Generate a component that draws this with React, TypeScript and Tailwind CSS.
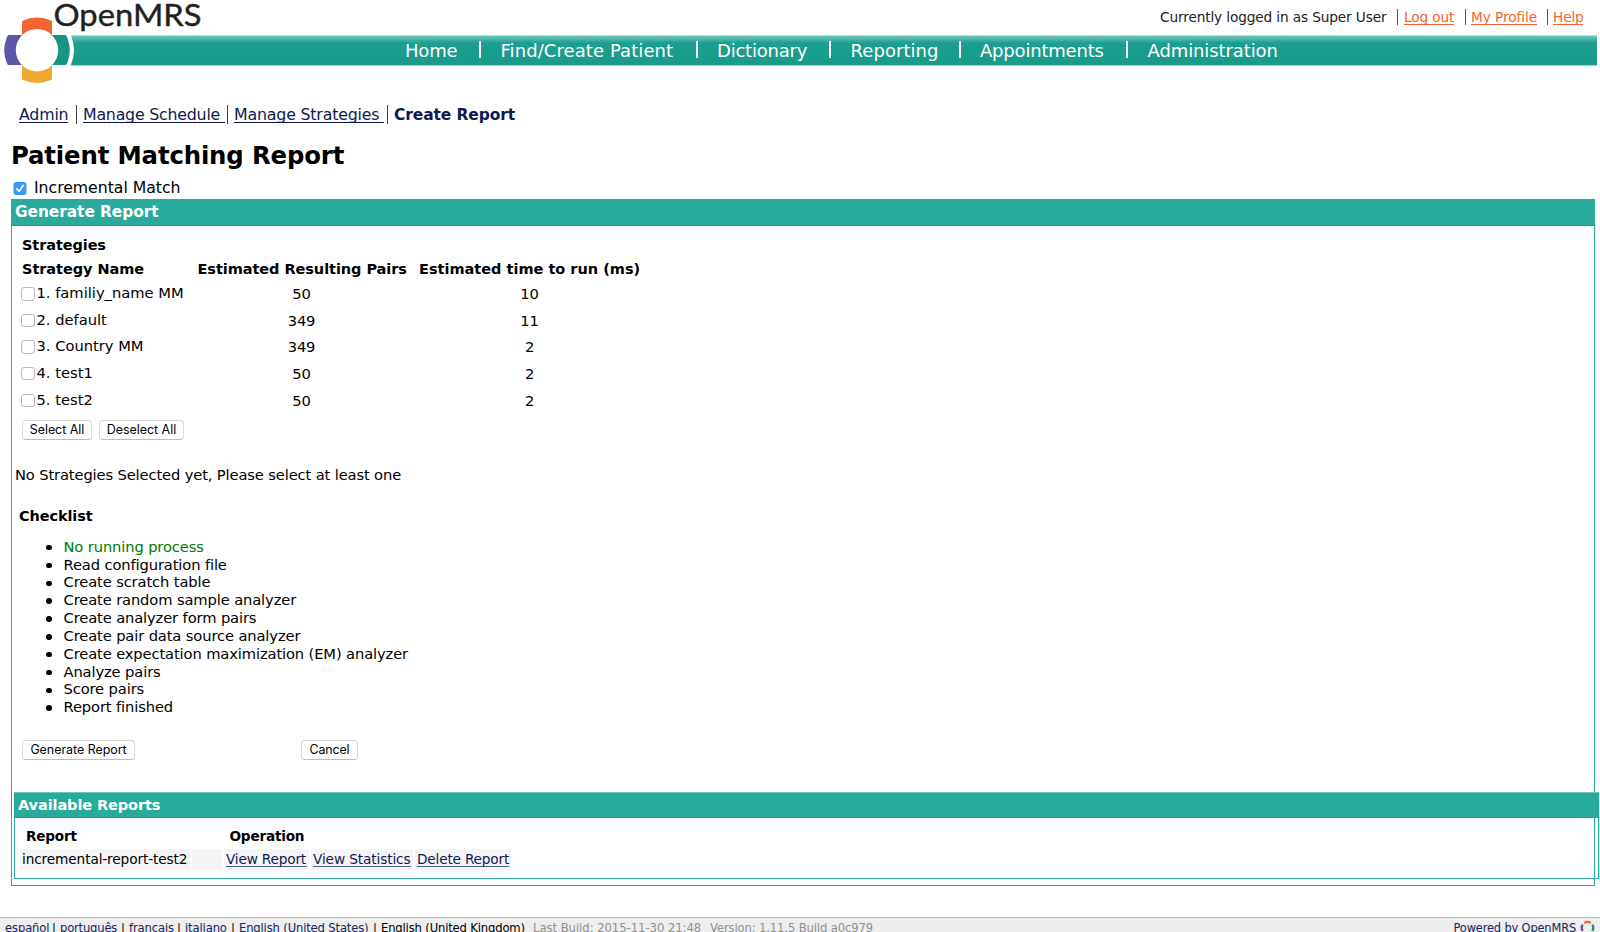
import type { ReactNode } from "react";

const nav = [
  { label: "Home", cls: "w-[74px] tracking-[-0.2px]" },
  { label: "Find/Create Patient", cls: "w-[195px] tracking-[0.08px]" },
  { label: "Dictionary", cls: "w-[112px] tracking-[-0.22px]" },
  { label: "Reporting", cls: "w-[108px] tracking-[0.06px]" },
  { label: "Appointments", cls: "w-[146px] tracking-[-0.2px]" },
  { label: "Administration", cls: "w-[140px] tracking-[-0.1px]" },
];

const strategies = [
  { name: "1. familiy_name MM", pairs: "50", time: "10" },
  { name: "2. default", pairs: "349", time: "11" },
  { name: "3. Country MM", pairs: "349", time: "2" },
  { name: "4. test1", pairs: "50", time: "2" },
  { name: "5. test2", pairs: "50", time: "2" },
];

const steps = [
  "Read configuration file",
  "Create scratch table",
  "Create random sample analyzer",
  "Create analyzer form pairs",
  "Create pair data source analyzer",
  "Create expectation maximization (EM) analyzer",
  "Analyze pairs",
  "Score pairs",
  "Report finished",
];

function Button({ className, children }: { className: string; children: ReactNode }) {
  return (
    <button
      type="button"
      className={`flex h-[20px] items-center justify-center rounded-[4px] border border-[#d8d8d8] border-b-[#bdbdbd] bg-white font-['Inter',sans-serif] text-[12.4px] leading-none whitespace-nowrap text-black ${className}`}
    >
      {children}
    </button>
  );
}

function Step({ children, className = "" }: { children: ReactNode; className?: string }) {
  return (
    <li className="flex h-[17.83px] items-center">
      <span className="mt-[2px] mr-[12px] h-[5.5px] w-[5.5px] rounded-full bg-black" />
      <span className={className}>{children}</span>
    </li>
  );
}

function Logo() {
  return (
    <svg className="absolute top-0 left-0" width="210" height="90" viewBox="0 0 210 90">
      <defs>
        <clipPath id="disc">
          <circle cx="37" cy="50.2" r="32.8" />
        </clipPath>
      </defs>
      <circle cx="37" cy="50.2" r="37" fill="#fff" />
      <g clipPath="url(#disc)">
        <rect x="22" y="10" width="30" height="40" fill="#f26531" />
        <rect x="22" y="50" width="30" height="40" fill="#eea92e" />
        <rect x="0" y="35" width="22" height="30" fill="#5c58a5" />
        <rect x="52" y="35" width="22" height="30" fill="#199384" />
      </g>
      <circle cx="37" cy="50.2" r="21.2" fill="#fff" />
      <text
        x="53.5"
        y="25.8"
        fontFamily="Lato, sans-serif"
        fontSize="31.5"
        letterSpacing="0"
        textLength="148"
        lengthAdjust="spacingAndGlyphs"
        fill="#231f20"
        stroke="#231f20"
        strokeWidth="0.4"
      >
        OpenMRS
      </text>
    </svg>
  );
}

export default function App() {
  return (
    <div className="h-[932px] w-[1600px] overflow-hidden bg-white font-['DejaVu_Sans',Verdana,sans-serif] text-[14.7px] tracking-[-0.12px] whitespace-nowrap text-black">
      <header className="relative h-[105px]">
        <div className="flex h-[35px] pl-[1160px] text-[13.7px] leading-[35px] tracking-[-0.14px] text-[#222]">
          <span className="w-[237px]">Currently logged in as Super User</span>
          <span className="mt-[9px] mr-[6px] h-[16px] w-px bg-[#555]" />
          <a className="mt-[9px] mr-[11px] h-[16px] w-[50px] border-b border-[#f26531] leading-[17px] text-[#f26531]">Log out</a>
          <span className="mt-[9px] mr-[5px] h-[16px] w-px bg-[#555]" />
          <a className="mt-[9px] mr-[10px] h-[16px] w-[66px] border-b border-[#f26531] leading-[17px] tracking-[-0.08px] text-[#f26531]">My Profile</a>
          <span className="mt-[9px] mr-[5px] h-[16px] w-px bg-[#555]" />
          <a className="mt-[9px] h-[16px] w-[30px] border-b border-[#f26531] leading-[17px] text-[#f26531]">Help</a>
        </div>
        <nav className="ml-[66px] flex h-[31px] w-[1531px] items-start border-t border-b border-t-[#a9dcd4] border-b-[#a3d9d1] bg-[linear-gradient(to_bottom,#66c5b9_0px,#4ab5a8_3px,#1b9e8e_7px,#199b8b_100%)] pl-[339px] text-[18px] leading-[29px] text-white">
          {nav.map((item, i) => (
            <div key={item.label} className="flex">
              {i > 0 && <span className="mt-[5px] mr-[19.5px] h-[17px] w-[2px] bg-white" />}
              <a className={item.cls}>{item.label}</a>
            </div>
          ))}
        </nav>
        <Logo />
      </header>

      <div className="flex h-[20px] pl-[19px] text-[15.8px] leading-[20px] tracking-[-0.18px] text-[#0d1a52]">
        <a className="mr-[8px] h-[18px] w-[49px] border-b border-[#0d1a52]">Admin</a>
        <span className="mr-[6px] h-[19px] w-px bg-[#444]" />
        <a className="mr-[2px] h-[18px] w-[142px] border-b border-[#0d1a52] tracking-[-0.22px]">Manage Schedule</a>
        <span className="mr-[6px] h-[19px] w-px bg-[#444]" />
        <a className="mr-[3px] h-[18px] w-[150px] border-b border-[#0d1a52]">Manage Strategies</a>
        <span className="mr-[6px] h-[19px] w-px bg-[#444]" />
        <span className="text-[15.5px] font-bold tracking-[-0.12px]">Create Report</span>
      </div>

      <h1 className="mt-[16px] h-[37px] pl-[11px] text-[24.4px] leading-[30px] font-bold tracking-[-0.16px]">
        Patient Matching Report
      </h1>

      <div className="flex h-[21px] pl-[13px] text-[15.7px] leading-[20px] tracking-[-0.02px]">
        <svg className="mt-[4px] mr-[8px]" width="14" height="13" viewBox="0 0 14 13">
          <rect x="0.5" width="13" height="13" rx="3" fill="#3b99fc" />
          <path d="M3.9 6.9 6.1 9.5 10.3 3.3" fill="none" stroke="#fff" strokeWidth="1.6" strokeLinecap="round" strokeLinejoin="round" />
        </svg>
        <span className="-ml-px">Incremental Match</span>
      </div>

      <main className="ml-[11px] h-[687px] w-[1584px] border border-[#2aab9b]">
        <h2 className="-mx-px -mt-px h-[27px] border-b border-[#0fa08f] bg-[#28ab9b] pl-[4px] text-[15.4px] leading-[27px] font-bold tracking-[-0.06px] text-white">
          Generate Report
        </h2>

        <section className="pt-[7px]">
          <h3 className="h-[24px] pl-[10px] text-[14.5px] leading-[24px] font-bold tracking-[-0.1px]">Strategies</h3>
          <div className="flex h-[23px] pl-[10px] text-[14.5px] leading-[24px] font-bold tracking-[-0.06px]">
            <span className="w-[175.5px]">Strategy Name</span>
            <span className="w-[221.5px]">Estimated Resulting Pairs</span>
            <span className="tracking-[0px]">Estimated time to run (ms)</span>
          </div>
          {strategies.map((s) => (
            <div key={s.name} className="flex h-[26.67px] pl-[9px] leading-[26.67px]">
              <span className="mt-[7px] mr-[2px] h-[13.5px] w-[13.5px] rounded-[3px] border border-[#b9b9b9] bg-white" />
              <span className="w-[163px] tracking-[0px]">{s.name}</span>
              <span className="mt-px w-[204px] text-center">{s.pairs}</span>
              <span className="mt-px w-[252px] text-center">{s.time}</span>
            </div>
          ))}
          <div className="mt-[7px] flex gap-[7px] pl-[10px]">
            <Button className="w-[70px] tracking-[0px]">Select All</Button>
            <Button className="w-[85px] tracking-[0px]">Deselect All</Button>
          </div>
        </section>

        <p className="mt-[25px] h-[41px] pl-[3px] leading-[20px] tracking-[-0.13px]">No Strategies Selected yet, Please select at least one</p>
        <h3 className="h-[31.5px] pl-[7px] text-[14.5px] leading-[20px] font-bold tracking-[-0.12px]">Checklist</h3>
        <ul className="pl-[34px] leading-[17.83px]">
          <Step className="text-[#007a00]">No running process</Step>
          {steps.map((s) => (
            <Step key={s}>{s}</Step>
          ))}
        </ul>
        <div className="mt-[24px] flex gap-[166px] pl-[10px]">
          <Button className="w-[113px] tracking-[0px]">Generate Report</Button>
          <Button className="w-[57px] tracking-[-0.1px]">Cancel</Button>
        </div>

        <section className="mt-[32px] ml-[2px] h-[87px] w-[1585px] border border-[#2aab9b]">
          <h2 className="-mx-px -mt-px h-[26px] border-t border-b border-t-[#6cc5ba] border-b-[#0fa08f] bg-[#28ab9b] pl-[4px] text-[14.6px] leading-[24px] font-bold tracking-[-0.15px] text-white">
            Available Reports
          </h2>
          <div className="mt-[7px] flex h-[22px] pl-[11px] text-[13.6px] leading-[22px] font-bold tracking-[-0.2px]">
            <span className="w-[203.5px]">Report</span>
            <span>Operation</span>
          </div>
          <div className="mt-[2px] flex h-[21px] gap-[2px] pl-[5px] text-[13.7px] leading-[21px] tracking-[-0.13px] text-[#0d1a52]">
            <span className="w-[170px] bg-[#f5f5f5] pl-[2px] text-black">incremental-report-test2</span>
            <span className="w-[30px] bg-[#f5f5f5]" />
            <span className="w-[85px] bg-[#f5f5f5] px-[2px]"><a className="block h-[18px] border-b border-[#0d1a52]/70 tracking-[-0.2px]">View Report</a></span>
            <span className="w-[102px] bg-[#f5f5f5] px-[2px]"><a className="block h-[18px] border-b border-[#0d1a52]/70">View Statistics</a></span>
            <span className="w-[96px] bg-[#f5f5f5] px-[2px]"><a className="block h-[18px] border-b border-[#0d1a52]/70 tracking-[-0.2px]">Delete Report</a></span>
          </div>
        </section>
      </main>

      <footer className="mt-[31px] flex h-[15px] border-t border-[#b5b5b5] bg-[#eee] pl-[5px] text-[11.6px] leading-[20px] tracking-[-0.13px] text-[#16235c]">
        <a className="w-[47px]">español</a>
        <span className="w-[8px] text-black">|</span>
        <a className="w-[61px] tracking-[-0.2px]">português</a>
        <span className="w-[8px] text-black">|</span>
        <a className="w-[48px]">français</a>
        <span className="w-[8px] text-black">|</span>
        <a className="w-[46px]">italiano</a>
        <span className="w-[8px] text-black">|</span>
        <a className="w-[134px] tracking-[-0.16px]">English (United States)</a>
        <span className="w-[8px] text-black">|</span>
        <span className="w-[152px] tracking-[-0.16px] text-black">English (United Kingdom)</span>
        <span className="w-[177px] tracking-[-0.03px] text-[#8f8f8f]">Last Build: 2015-11-30 21:48</span>
        <span className="text-[#8f8f8f]">Version: 1.11.5 Build a0c979</span>
        <span className="mr-[4px] ml-auto text-[11.4px] tracking-[-0.14px]">Powered by OpenMRS</span>
        <svg className="mt-[2px] mr-[5px]" width="15" height="15" viewBox="0 0 15 15" fill="none" strokeWidth="2.4">
          <path d="M4.3 2.9A5.9 5.9 0 0 1 10.7 2.9" stroke="#f26531" />
          <path d="M2.7 4.6A5.9 5.9 0 0 0 2.7 10.9" stroke="#5c58a5" />
          <path d="M12.3 4.6A5.9 5.9 0 0 1 12.3 10.9" stroke="#199384" />
          <path d="M4.3 12.6A5.9 5.9 0 0 0 10.7 12.6" stroke="#eea92e" />
        </svg>
      </footer>
    </div>
  );
}
